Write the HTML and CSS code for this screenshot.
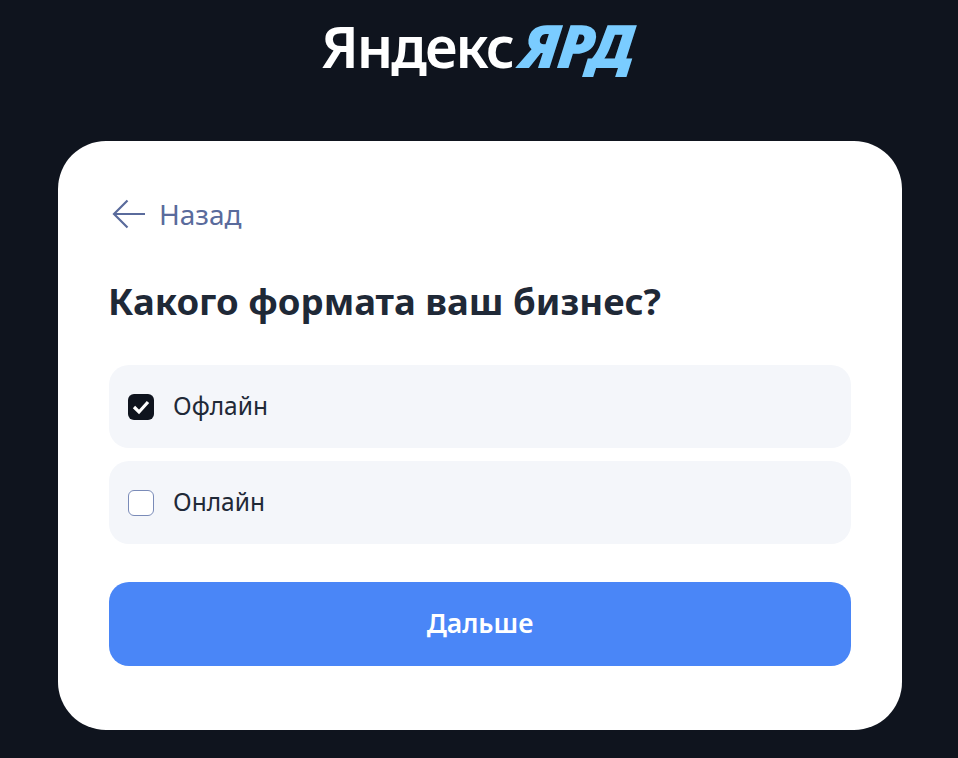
FILE: index.html
```html
<!DOCTYPE html>
<html>

<head>
    <meta charset="utf-8">
    <link rel="stylesheet" href="styles.css">
</head>

<body>
    <header class="header">
        <div class="logo"><span class="logo-main">Яндекс</span><span class="logo-accent">ЯРД</span></div>
    </header>
    <main class="card">
        <a class="back" href="#">
            <svg class="back-icon" width="34" height="30" viewBox="0 0 34 30" fill="none">
                <path d="M15.5 1.5 L2 15 L15.5 28.5 M2 15 H33" stroke="#5a6b9c" stroke-width="2.2" />
            </svg>
            <span>Назад</span>
        </a>
        <h1 class="title">Какого формата ваш бизнес?</h1>
        <label class="option">
            <span class="box box-checked">
                <svg width="26" height="26" viewBox="0 0 26 26" fill="none">
                    <path d="M6 13 L11 18 L20 8" stroke="#fff" stroke-width="3.2" />
                </svg>
            </span>
            <span class="option-text">Офлайн</span>
        </label>
        <label class="option">
            <span class="box"></span>
            <span class="option-text">Онлайн</span>
        </label>
        <button class="next">Дальше</button>
    </main>
</body>

</html>
```

FILE: styles.css
```css
body {
    font-family: "Noto Sans", Arial, sans-serif;
    background-color: #0f141e;
    margin: 0;
    height: 758px;
    overflow: hidden;
}

.header {
    height: 141px;
    display: flex;
    justify-content: center;
    padding-right: 3px;
    box-sizing: border-box;
}

.logo {
    margin-top: 7px;
    font-size: 57px;
    line-height: 76px;
    font-weight: 600;
    letter-spacing: -2px;
    height: 76px;
    white-space: nowrap;
}

.logo-main {
    color: #fff;
}

.logo-accent {
    display: inline-block;
    color: #7accff;
    font-size: 60px;
    font-weight: 900;
    font-style: italic;
    letter-spacing: -1px;
    margin-left: 8px;
    transform: skewX(-6deg);
}

.card {
    background: #fff;
    border-radius: 48px;
    margin-left: 58px;
    width: 844px;
    height: 589px;
    padding: 56px 51px 0;
    box-sizing: border-box;
}

.back {
    display: flex;
    align-items: center;
    gap: 13px;
    color: #5a6b9c;
    font-size: 28px;
    line-height: 34px;
    text-decoration: none;
}

.back-icon {
    margin-left: 3px;
}

.title {
    margin: 45px 0 39px -1px;
    color: #1f2937;
    font-size: 36.5px;
    line-height: 50px;
    font-weight: 700;
}

.option {
    display: flex;
    align-items: center;
    gap: 19px;
    height: 83px;
    margin-bottom: 13px;
    padding-left: 19px;
    background: #f4f6fa;
    border-radius: 20px;
    color: #1f2937;
    font-size: 24.5px;
}

.option-text {
    padding-bottom: 2px;
}

.box {
    width: 26px;
    height: 26px;
    box-sizing: border-box;
    border: 1px solid #7a8bb8;
    border-radius: 6px;
    background: #fff;
}

.box-checked {
    border: none;
    background: #0f141e;
}

.box-checked svg {
    display: block;
}

.next {
    display: block;
    width: 100%;
    height: 84px;
    margin-top: 38px;
    padding: 0 0 2px;
    border: none;
    border-radius: 20px;
    background: #4a86f7;
    color: #fff;
    font-family: inherit;
    font-size: 26.5px;
    font-weight: 600;
    cursor: pointer;
}
```
